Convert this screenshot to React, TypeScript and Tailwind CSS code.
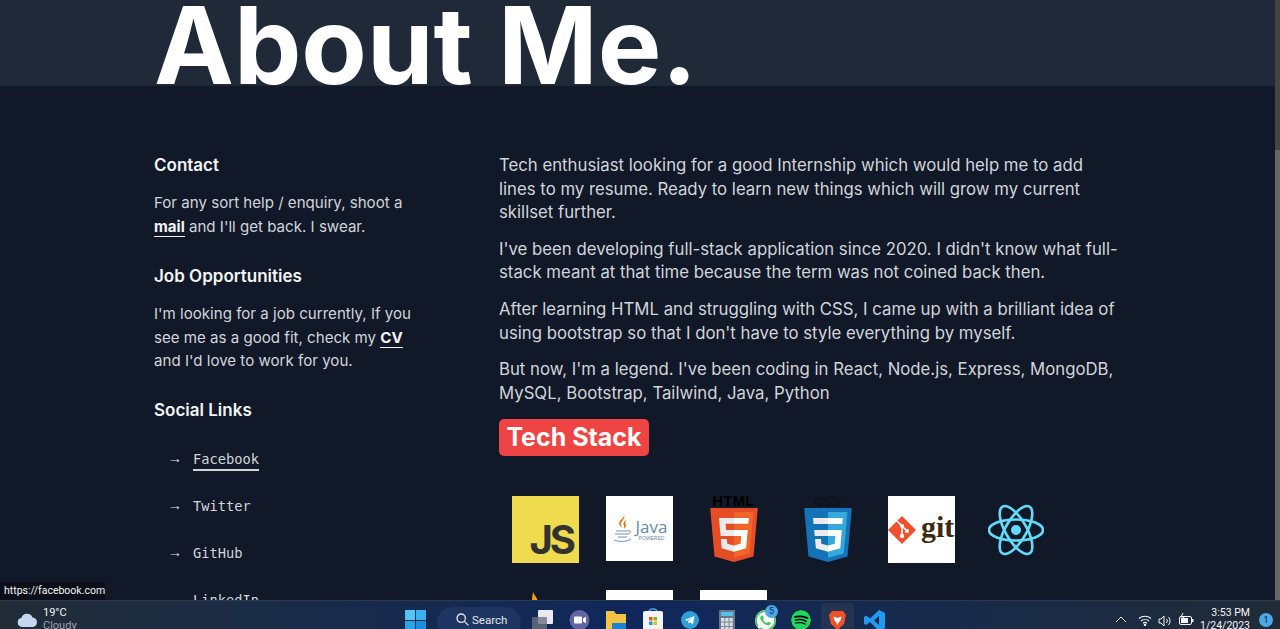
import React from "react";
import { SiSpotify, SiWhatsapp } from "react-icons/si";

const inter = { fontFamily: "Inter, sans-serif" };

function Icon67({ children, className = "" }: { children?: React.ReactNode; className?: string }) {
  return <div className={"relative w-[67px] h-[67px] shrink-0 " + className}>{children}</div>;
}

function Js() {
  return (
    <Icon67 className="bg-[#f0db4f] flex items-end justify-end pr-[6px] pb-[1px]">
      <span className="font-['Inter',sans-serif] font-bold text-[40px] leading-[44px] tracking-[-3px] text-[#323330]">JS</span>
    </Icon67>
  );
}

function Java() {
  return (
    <Icon67>
      <div className="bg-white h-[65px] w-[67px] flex items-center justify-center gap-[3px] pl-[1px]">
        <svg width="20" height="28" viewBox="0 0 20 28" fill="none">
          <path d="M11 0c2 4-4 6-3 10 .4 2 2 3 2 3-3-2-5-4-3-7 1-2 4-3 4-6Z" fill="#e76f00" />
          <path d="M13 5c-3 2-3 4-2 6 .5 1 .3 2-.5 3 2-1 3-3 2-5-.5-1 0-2 .5-4Z" fill="#e76f00" />
          <path d="M3 16h12M2 19h13M5 22h9M1 25c4 2 13 2 17-1M15 16c3-1 4 2 0 3" stroke="#6f94ae" strokeWidth="1" />
        </svg>
        <div className="flex flex-col items-center leading-none pt-[2px]">
          <span className="font-['Open_Sans',sans-serif] text-[17px] leading-[17px] text-[#6a8aa5]">Java</span>
          <span className="font-['Liberation_Sans',sans-serif] text-[5px] leading-[6px] text-[#6a8aa5]">POWERED</span>
        </div>
      </div>
    </Icon67>
  );
}

function Html() {
  return (
    <Icon67 className="flex flex-col items-center">
      <span className="font-['Liberation_Sans',sans-serif] font-bold text-[14.5px] leading-[9px] pt-[1px] h-[10px] text-black tracking-[0.4px]">HTML</span>
      <svg width="48" height="54" viewBox="30 0 452 512" className="mt-[2px]">
        <path d="M71 460 30 0h452l-41 460-185 52z" fill="#e44d26" />
        <path d="m256 472 149-41 35-394H256z" fill="#f16529" />
        <path d="M256 208h-75l-5-58h80V94H114l1 15 14 156h127zM256 355h-1l-63-17-4-45h-56l7 89 116 32h1z" fill="#ebebeb" />
        <path d="M255 208v57h70l-7 73-63 17v59l116-32 1-10 13-149 2-15zM255 94v56h137l1-12 3-29 1-15z" fill="#fff" />
      </svg>
    </Icon67>
  );
}

function Css() {
  return (
    <Icon67 className="flex flex-col items-center">
      <span className="font-['Liberation_Sans',sans-serif] font-bold text-[13px] leading-[9px] pt-[1px] h-[10px] text-[#0c111b] tracking-[0.2px]">CSS</span>
      <svg width="48" height="54" viewBox="30 0 452 512" className="mt-[2px]">
        <path d="M71 460 30 0h452l-41 460-185 52z" fill="#1572b6" />
        <path d="m256 472 149-41 35-394H256z" fill="#33a9dc" />
        <path d="M125 209h131v56H130zM114 94h142v57H119zM256 355l-63-17-4-45h-56l8 89 115 32z" fill="#ebebeb" />
        <path d="M256 209v56h70l-7 73-63 17v59l116-32 15-173zM256 94v57h136l5-57z" fill="#fff" />
      </svg>
    </Icon67>
  );
}

function Git() {
  return (
    <Icon67 className="bg-white flex items-center overflow-hidden">
      <svg width="28" height="28" viewBox="0 0 28 28" className="shrink-0">
        <path d="M14 0 28 14 14 28 0 14Z" fill="#f1502f" />
        <path d="M9 5l10 10M14 10v9" stroke="#fff" strokeWidth="1.6" />
        <circle cx="14" cy="10" r="2" fill="#fff" />
        <circle cx="14" cy="20" r="2.2" fill="#fff" />
        <circle cx="19" cy="15" r="2" fill="#fff" />
      </svg>
      <span className="font-['Liberation_Serif',serif] font-bold text-[30px] leading-[30px] text-[#3c2a0f] ml-[5px] pb-[6px]">git</span>
    </Icon67>
  );
}

function ReactLogo() {
  return (
    <Icon67 className="flex items-center justify-center">
      <svg width="56" height="52" viewBox="-28 -26 56 52" fill="none" stroke="#61dafb" strokeWidth="2.6">
        <ellipse rx="27" ry="10.5" />
        <ellipse rx="27" ry="10.5" transform="rotate(60)" />
        <ellipse rx="27" ry="10.5" transform="rotate(120)" />
        <circle r="5" fill="#61dafb" stroke="none" />
      </svg>
    </Icon67>
  );
}

function Firebase() {
  return (
    <Icon67>
      <svg width="67" height="67" viewBox="0 0 67 67">
        <path d="M21 2 29 16 14 50Z" fill="#ffa000" />
      </svg>
    </Icon67>
  );
}

function Contact() {
  return (
    <aside className="w-[345px] shrink-0">
      <h2 className="text-[17px] leading-[24px] font-semibold text-[#f3f4f6]">Contact</h2>
      <p className="mt-[14px] text-[15.1px] leading-[23.6px] text-[#d1d5db]">
        For any sort help / enquiry, shoot a<br />
        <a className="font-bold text-[#f3f4f6] border-b border-[#f3f4f6]">mail</a> and I'll get back. I swear.
      </p>
      <h2 className="mt-[26px] text-[17px] leading-[24px] font-semibold text-[#f3f4f6]">Job Opportunities</h2>
      <p className="mt-[14px] text-[15.1px] leading-[23.6px] text-[#d1d5db]">
        I'm looking for a job currently, If you<br />
        see me as a good fit, check my <a className="font-bold text-[#f3f4f6] border-b border-[#f3f4f6]">CV</a>
        <br />
        and I'd love to work for you.
      </p>
      <h2 className="mt-[25px] text-[17px] leading-[24px] font-semibold text-[#f3f4f6]">Social Links</h2>
      <ul className="mt-[25px] font-['DejaVu_Sans_Mono',monospace] text-[13.7px] text-[#d1d5db] flex flex-col gap-[23px]">
        {["Facebook", "Twitter", "GitHub", "LinkedIn", "Instagram"].map((s, i) => (
          <li key={s} className="flex items-center h-[24px] pl-[14px]">
            <span className="w-[25px] text-[#e5e7eb] font-['Liberation_Sans',sans-serif] text-[14px]">→</span>
            <a className={i === 0 ? "border-b-2 border-[#d1d5db] leading-[19px] pt-[1px] translate-y-[1px]" : ""}>{s}</a>
          </li>
        ))}
      </ul>
    </aside>
  );
}

function About() {
  const ps = [
    "Tech enthusiast looking for a good Internship which would help me to add lines to my resume. Ready to learn new things which will grow my current skillset further.",
    "I've been developing full-stack application since 2020. I didn't know what full-stack meant at that time because the term was not coined back then.",
    "After learning HTML and struggling with CSS, I came up with a brilliant idea of using bootstrap so that I don't have to style everything by myself.",
    "But now, I'm a legend. I've been coding in React, Node.js, Express, MongoDB, MySQL, Bootstrap, Tailwind, Java, Python",
  ];
  return (
    <section className="w-[622px] shrink-0 pt-[1px]">
      <div className="flex flex-col gap-[13px] text-[16.75px] leading-[23.6px] text-[#d1d5db]">
        {ps.map((p) => (
          <p key={p}>{p}</p>
        ))}
      </div>
      <div className="mt-[14px] w-[150px] h-[37px] bg-[#ef4444] rounded-[5px] flex items-center justify-center text-white font-bold text-[25px] leading-none">
        Tech Stack
      </div>
      <div className="mt-[40px] pl-[13px] grid grid-cols-[repeat(6,67px)] gap-[27px]">
        <Js />
        <Java />
        <Html />
        <Css />
        <Git />
        <ReactLogo />
        <Firebase />
        <Icon67 className="bg-white" />
        <Icon67 className="bg-white" />
      </div>
    </section>
  );
}

function WinLogo() {
  return (
    <svg width="21" height="21" viewBox="0 0 21 21">
      <rect x="0" y="0" width="10" height="10" fill="#53c5f5" />
      <rect x="11" y="0" width="10" height="10" fill="#3bb2ef" />
      <rect x="0" y="11" width="10" height="10" fill="#2ba3ea" />
      <rect x="11" y="11" width="10" height="10" fill="#1a8fe0" />
    </svg>
  );
}

function Taskbar() {
  return (
    <footer className="h-[29px] shrink-0 overflow-hidden border-t border-[#2a3a4e] flex items-start bg-gradient-to-r from-[#212c36] via-[#10275c] via-50% to-[#202b37] text-white">
      <div className="w-[405px] shrink-0 flex items-start pl-[17px] pt-[5px]">
        <svg width="21" height="16" viewBox="0 0 21 16" className="mt-[6px]">
          <path d="M5 15a4.5 4.5 0 0 1-.7-8.9A6 6 0 0 1 15.6 5.5 4.8 4.8 0 0 1 16 15Z" fill="#c5d6f2" />
        </svg>
        <div className="ml-[5px] font-['Roboto',sans-serif] text-[11px] leading-[13px]">
          <div className="text-[#f3f4f6]">19°C</div>
          <div className="text-[#9ca3af]">Cloudy</div>
        </div>
      </div>
      <div className="pt-[9px]"><WinLogo /></div>
      <div className="ml-[11px] mt-[6px] w-[84px] h-[30px] rounded-full bg-[#1d3560] flex items-start pl-[19px] pt-[5px] gap-[3px] font-['Roboto',sans-serif] text-[11.5px] text-[#e5e7eb] leading-[16px]">
        <svg width="13" height="13" viewBox="0 0 13 13" fill="none" stroke="#e5e7eb" strokeWidth="1.3" className="mt-[1px] shrink-0">
          <circle cx="5.2" cy="5.2" r="4.2" />
          <path d="m8.4 8.4 4 4" />
        </svg>
        <span>Search</span>
      </div>
      <div className="ml-[11px] pt-[6px] w-[21px] relative">
        <div className="absolute left-[6px] top-[9px] w-[15px] h-[14px] bg-[#e8eaee] rounded-[1px]" />
        <div className="absolute left-0 top-[16px] w-[15px] h-[14px] bg-[#6b7280]/80 rounded-[1px]" />
      </div>
      <svg width="21" height="24" viewBox="0 0 21 24" className="ml-[16px] mt-[8px]">
        <circle cx="10.5" cy="11" r="10" fill="#6264a7" />
        <rect x="5" y="7.5" width="8" height="7" rx="1" fill="#fff" />
        <path d="m14 9.5 3-2v7l-3-2Z" fill="#fff" />
      </svg>
      <svg width="20" height="24" viewBox="0 0 20 24" className="ml-[16px] mt-[9px]">
        <path d="M0 1h8l2 3h10v20H0Z" fill="#f4c542" />
        <rect x="6" y="13" width="14" height="11" fill="#1a83d4" />
      </svg>
      <svg width="20" height="24" viewBox="0 0 20 24" className="ml-[17px] mt-[7px]">
        <path d="M6 4c0-4 8-4 8 0" stroke="#4aa3e8" strokeWidth="1.5" fill="none" />
        <rect x="0" y="3" width="20" height="20" rx="2" fill="#f2f4f7" />
        <rect x="6" y="9" width="3.5" height="3.5" fill="#f25022" />
        <rect x="10.5" y="9" width="3.5" height="3.5" fill="#7fba00" />
        <rect x="6" y="13.5" width="3.5" height="3.5" fill="#00a4ef" />
        <rect x="10.5" y="13.5" width="3.5" height="3.5" fill="#ffb900" />
      </svg>
      <svg width="18" height="18" viewBox="0 0 18 18" className="ml-[18px] mt-[10px]">
        <circle cx="9" cy="9" r="9" fill="#2a9fd8" />
        <path d="M3.5 9 13.5 5l-1.6 8.4-3-2.2-1.5 1.4-.3-2.6 4.5-3.6-5.6 3.3Z" fill="#fff" />
      </svg>
      <svg width="16" height="24" viewBox="0 0 16 24" className="ml-[20px] mt-[9px]">
        <rect width="16" height="24" rx="1" fill="#66788a" />
        <rect x="2" y="2" width="12" height="4" fill="#4fc3e8" />
        {[0, 1, 2].map((c) =>
          [0, 1, 2].map((r) => <rect key={c + "-" + r} x={2 + c * 4.2} y={8 + r * 4.4} width="3.4" height="3.6" fill="#d6dde4" />)
        )}
      </svg>
      <div className="ml-[20px] mt-[9px] w-[20px] relative">
        <SiWhatsapp className="w-[21px] h-[21px] text-[#3ccb5e] bg-white rounded-full" />
        <div className="absolute left-[10px] top-[-5px] w-[13px] h-[13px] rounded-full bg-[#4ba8e8] text-[#10275c] text-[9px] leading-[13px] text-center font-['Roboto',sans-serif]">5</div>
      </div>
      <SiSpotify className="ml-[16px] mt-[9px] w-[20px] h-[20px] text-[#1ed760] bg-black rounded-full" />
      <div className="ml-[10px] mt-[2px] w-[33px] h-[30px] bg-[#233350] rounded-[4px] flex justify-center pt-[7px]">
        <svg width="17" height="20" viewBox="0 0 17 20">
          <path d="M3 1h11l3 4-2 9-6.5 6L2 14 0 5Z" fill="#f0502a" />
          <path d="M4.5 6.5 8.5 8l4-1.500-1 4-1.500 1.500-1.500 3-1.500-3-1.500-1.500Z" fill="#fff" />
        </svg>
      </div>
      <svg width="21" height="21" viewBox="0 0 21 21" className="ml-[10px] mt-[9px]">
        <path d="M15 0 21 3v15l-6 3L6 12l-4 3-2-1.500V7l2-1.500 4 3Zm0 6-5 4.500 5 4.500Z" fill="#1f9cf0" />
      </svg>
      <div className="flex-1 relative h-full flex items-start pl-[230px] pt-[14px] text-[#f3f4f6]">
        <svg width="12" height="7" viewBox="0 0 12 7" fill="none" stroke="#f3f4f6" strokeWidth="1" className="mt-[1px]">
          <path d="m1 6 5-5 5 5" />
        </svg>
        <svg width="14" height="11" viewBox="0 0 14 11" fill="none" stroke="#f3f4f6" strokeWidth="1.100" className="ml-[11px]">
          <path d="M1 3.500a9 9 0 0 1 12 0M3 6a6 6 0 0 1 8 0M5 8.300a3 3 0 0 1 4 0" />
          <circle cx="7" cy="10" r="0.700" fill="#f3f4f6" />
        </svg>
        <svg width="14" height="12" viewBox="0 0 14 12" fill="none" stroke="#f3f4f6" strokeWidth="1" className="ml-[6px]">
          <path d="M1 4v4h2l3 3V1L3 4ZM8.500 4a3 3 0 0 1 0 4M10.500 2a6 6 0 0 1 0 8" />
        </svg>
        <svg width="15" height="13" viewBox="0 0 15 13" className="ml-[7px] -mt-[2px]">
          <rect x="0.500" y="3.500" width="12" height="8" rx="1.500" fill="none" stroke="#f3f4f6" />
          <rect x="2" y="5" width="7" height="5" fill="#f3f4f6" />
          <rect x="13" y="6" width="1.500" height="3" fill="#f3f4f6" />
          <path d="M4 0 2 4h3L3.500 7" stroke="#f3f4f6" fill="none" />
        </svg>
        <div className="absolute right-[30px] top-[5px] text-right font-['Roboto',sans-serif] text-[10.5px] leading-[13px] text-[#f3f4f6]">
          <div>3:53 PM</div>
          <div>1/24/2023</div>
        </div>
        <div className="absolute right-[7px] top-[12px] w-[14px] h-[14px] rounded-full bg-[#4ba8e8] text-[#0c1a3c] text-[9px] leading-[14px] text-center font-['Roboto',sans-serif]">1</div>
      </div>
    </footer>
  );
}

export default function App() {
  return (
    <div className="relative h-screen w-full overflow-hidden flex flex-col bg-[#111827]" style={inter}>
      <div className="flex-1 min-h-0 flex overflow-hidden">
        <main className="flex-1 min-w-0 overflow-hidden">
          <header className="h-[86px] bg-[#1f2937] overflow-hidden pl-[154px]">
            <h1 className="font-bold text-white text-[107px] leading-[90px] whitespace-nowrap">About Me.</h1>
          </header>
          <div className="flex pl-[154px] pt-[67px]">
            <Contact />
            <About />
          </div>
        </main>
        <div className="w-[5px] shrink-0 flex flex-col bg-[#666666]">
          <div className="h-[150px] bg-[#444444]" />
        </div>
      </div>
      <Taskbar />
      <div className="absolute left-0 top-[582px] h-[18px] w-[105px] bg-[#0c0f18] text-[#f3f4f6] text-[10.5px] leading-[18px] pl-[4px] font-['Roboto',sans-serif] rounded-tr-[2px]">
        https://facebook.com
      </div>
    </div>
  );
}
